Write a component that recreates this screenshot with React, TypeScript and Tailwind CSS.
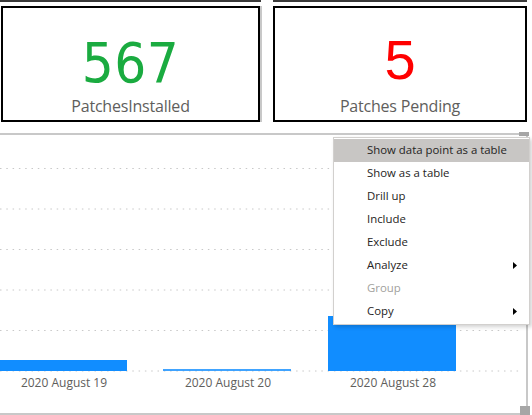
import React from "react";

const items: { label: string; disabled?: boolean; arrow?: boolean; active?: boolean }[] = [
  { label: "Show data point as a table", active: true },
  { label: "Show as a table" },
  { label: "Drill up" },
  { label: "Include" },
  { label: "Exclude" },
  { label: "Analyze", arrow: true },
  { label: "Group", disabled: true },
  { label: "Copy", arrow: true },
];

const gridY = [33.5, 74, 114.5, 155, 195.5, 236];

export default function App() {
  return (
    <div
      className="relative w-[532px] h-[415px] bg-white overflow-hidden"
      style={{ fontFamily: '"Open Sans", "Noto Sans", sans-serif' }}
    >
      {/* top strip: bottoms of cards above */}
      <div className="flex h-[2px]">
        <div className="w-[261px] bg-[#3a3a3a]" />
        <div className="w-[12px]" />
        <div className="w-[254px] bg-[#3a3a3a]" />
      </div>

      {/* KPI cards */}
      <div className="flex mt-[4px] h-[116px]">
        <div className="ml-[1px] w-[259px] border-2 border-black flex flex-col items-center">
          <div
            className="mt-[25px] text-[56px] leading-[60px] text-[#1aab40] tracking-[0.5px]"
            style={{ fontFamily: '"DejaVu Sans Condensed", Roboto, sans-serif' }}
          >
            567
          </div>
          <div className="mt-[3px] text-[16px] leading-[20px] text-[#605e5c] tracking-[-0.2px]">PatchesInstalled</div>
        </div>
        <div className="w-[2px] bg-[#c8c8c8]" />
        <div className="ml-[11px] w-[254px] border-2 border-black flex flex-col items-center">
          <div
            className="mt-[22px] text-[56px] leading-[60px] text-[#ff0000]"
            style={{ fontFamily: '"Liberation Sans", Arial, sans-serif' }}
          >
            5
          </div>
          <div className="mt-[6px] text-[16px] leading-[20px] text-[#605e5c] tracking-[-0.2px]">Patches Pending</div>
        </div>
      </div>

      {/* chart */}
      <div className="mt-[11px] w-[528px] h-[282px] border-t-2 border-b-2 border-r-2 border-[#c8c8c8] flex flex-col">
        <svg width="526" height="237" className="block">
          {gridY.map((y) => (
            <line
              key={y}
              x1="0"
              x2="520"
              y1={y}
              y2={y}
              stroke="#c8c8c8"
              strokeWidth="1"
              strokeDasharray="1.5 4.8"
            />
          ))}
          <rect x="0" y="225" width="127" height="11" fill="#118dff" />
          <rect x="163" y="234" width="128" height="2" fill="#118dff" opacity="0.8" />
          <rect x="328" y="181" width="128" height="55" fill="#118dff" />
        </svg>
        <div className="flex h-[22px] text-[12px] leading-[22px] text-[#605e5c]">
          <div className="w-[128px] text-center">2020 August 19</div>
          <div className="w-[36px]" />
          <div className="w-[128px] text-center">2020 August 20</div>
          <div className="w-[36px]" />
          <div className="w-[130px] text-center">2020 August 28</div>
        </div>
      </div>

      {/* focus-mode handles */}
      <div className="absolute left-[519px] top-[132px] w-[10px] h-[4px] bg-[#a6a6a6]" />
      <div className="absolute left-[520px] top-[406px] w-[10px] h-[9px] bg-[#a6a6a6]" />

      {/* context menu */}
      <div className="absolute left-[333px] top-[137px] w-[197px] py-[1px] bg-white border border-[#d2d0ce] shadow-[2px_2px_4px_rgba(0,0,0,0.18)]">
        {items.map((it) => (
          <div
            key={it.label}
            className={
              "relative h-[23px] pl-[33px] text-[11.4px] leading-[22px] " +
              (it.active ? "bg-[#c8c6c4] " : "") +
              (it.disabled ? "text-[#a19f9d]" : "text-[#252423]")
            }
          >
            {it.label}
            {it.arrow && (
              <svg className="absolute right-[12px] top-[8px]" width="4" height="7" viewBox="0 0 4 7">
                <path d="M0 0 L4 3.5 L0 7 Z" fill="#000" />
              </svg>
            )}
          </div>
        ))}
      </div>
    </div>
  );
}
